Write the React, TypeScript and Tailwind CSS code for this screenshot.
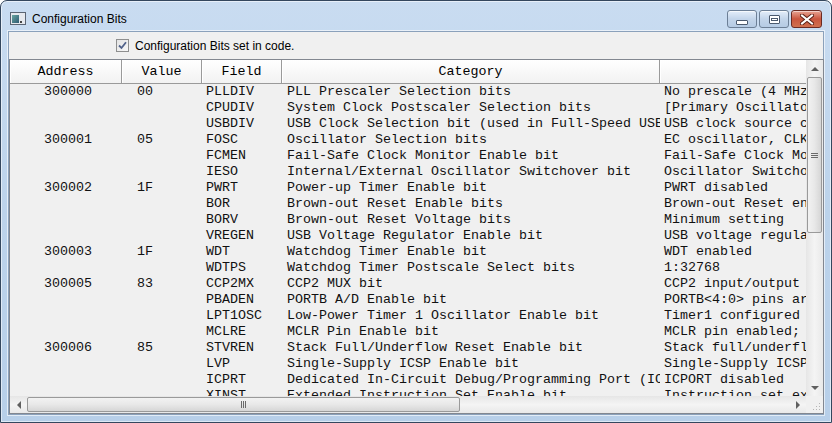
import React from 'react';

type Row = { addr: string; value: string; field: string; category: string; setting: string };

const rows: Row[] = [
  { addr: '300000', value: '00', field: 'PLLDIV', category: 'PLL Prescaler Selection bits', setting: 'No prescale (4 MHz oscillator input drives PLL directly)' },
  { addr: '', value: '', field: 'CPUDIV', category: 'System Clock Postscaler Selection bits', setting: '[Primary Oscillator Src: /1][96 MHz PLL Src: /2]' },
  { addr: '', value: '', field: 'USBDIV', category: 'USB Clock Selection bit (used in Full-Speed USB mode only; UCFG:FSEN = 1)', setting: 'USB clock source comes directly from the primary oscillator' },
  { addr: '300001', value: '05', field: 'FOSC', category: 'Oscillator Selection bits', setting: 'EC oscillator, CLKO function on RA6 (EC)' },
  { addr: '', value: '', field: 'FCMEN', category: 'Fail-Safe Clock Monitor Enable bit', setting: 'Fail-Safe Clock Monitor disabled' },
  { addr: '', value: '', field: 'IESO', category: 'Internal/External Oscillator Switchover bit', setting: 'Oscillator Switchover mode disabled' },
  { addr: '300002', value: '1F', field: 'PWRT', category: 'Power-up Timer Enable bit', setting: 'PWRT disabled' },
  { addr: '', value: '', field: 'BOR', category: 'Brown-out Reset Enable bits', setting: 'Brown-out Reset enabled in hardware only' },
  { addr: '', value: '', field: 'BORV', category: 'Brown-out Reset Voltage bits', setting: 'Minimum setting' },
  { addr: '', value: '', field: 'VREGEN', category: 'USB Voltage Regulator Enable bit', setting: 'USB voltage regulator disabled' },
  { addr: '300003', value: '1F', field: 'WDT', category: 'Watchdog Timer Enable bit', setting: 'WDT enabled' },
  { addr: '', value: '', field: 'WDTPS', category: 'Watchdog Timer Postscale Select bits', setting: '1:32768' },
  { addr: '300005', value: '83', field: 'CCP2MX', category: 'CCP2 MUX bit', setting: 'CCP2 input/output is multiplexed with RC1' },
  { addr: '', value: '', field: 'PBADEN', category: 'PORTB A/D Enable bit', setting: 'PORTB<4:0> pins are configured as analog input channels on Reset' },
  { addr: '', value: '', field: 'LPT1OSC', category: 'Low-Power Timer 1 Oscillator Enable bit', setting: 'Timer1 configured for higher power operation' },
  { addr: '', value: '', field: 'MCLRE', category: 'MCLR Pin Enable bit', setting: 'MCLR pin enabled; RE3 input pin disabled' },
  { addr: '300006', value: '85', field: 'STVREN', category: 'Stack Full/Underflow Reset Enable bit', setting: 'Stack full/underflow will cause Reset' },
  { addr: '', value: '', field: 'LVP', category: 'Single-Supply ICSP Enable bit', setting: 'Single-Supply ICSP enabled' },
  { addr: '', value: '', field: 'ICPRT', category: 'Dedicated In-Circuit Debug/Programming Port (ICPORT) Enable bit', setting: 'ICPORT disabled' },
  { addr: '', value: '', field: 'XINST', category: 'Extended Instruction Set Enable bit', setting: 'Instruction set extension and Indexed Addressing mode disabled' },
];

const mono = { fontFamily: '"Liberation Mono", "Courier New", monospace' };
const sans = { fontFamily: '"Liberation Sans", Arial, sans-serif' };

function CaptionButton({ kind }: { kind: 'min' | 'max' | 'close' }) {
  if (kind === 'close') {
    return (
      <div className="w-[31px] h-[18px] rounded-[3px] border border-[#6b2a22] bg-gradient-to-b from-[#e8a493] via-[#c9553e] to-[#d0704f] flex items-center justify-center shadow-[inset_0_1px_0_rgba(255,255,255,0.5)]">
        <svg width="14" height="11" viewBox="0 0 14 11">
          <path d="M2 1.5 L12 9.5 M12 1.5 L2 9.5" stroke="#5a2016" strokeWidth="4" strokeLinecap="square" />
          <path d="M2 1.5 L12 9.5 M12 1.5 L2 9.5" stroke="#ffffff" strokeWidth="2" strokeLinecap="square" />
        </svg>
      </div>
    );
  }
  return (
    <div className="w-[30px] h-[18px] rounded-[3px] border border-[#6c7f96] bg-gradient-to-b from-[#e4eefa] via-[#c3d5ea] to-[#b5cbe4] flex items-center justify-center shadow-[inset_0_1px_0_rgba(255,255,255,0.7)]">
      {kind === 'min' ? (
        <div className="w-[12px] h-[5px] mt-[6px] bg-white border border-[#4b5a6e] rounded-[1px]" />
      ) : (
        <div className="w-[11px] h-[9px] border border-[#4b5a6e] bg-white flex items-center justify-center rounded-[1px]">
          <div className="w-[7px] h-[3px] border border-[#4b5a6e] mt-[1px]" />
        </div>
      )}
    </div>
  );
}

function HeaderCell({ w, label }: { w: string; label: string }) {
  return (
    <div className={`${w} h-full shrink-0 flex items-center justify-center pt-[1px] border-r border-[#9a9a9a] bg-gradient-to-b from-[#ffffff] to-[#f2f2f2] text-black text-[13.33px] shadow-[inset_1px_0_0_#ffffff]`} style={mono}>
      {label}
    </div>
  );
}

function Arrow({ dir }: { dir: 'up' | 'down' | 'left' | 'right' }) {
  const pts = {
    up: '0,4 4,0 8,4',
    down: '0,0 8,0 4,4',
    left: '4,0 4,8 0,4',
    right: '0,0 0,8 4,4',
  }[dir];
  const horiz = dir === 'left' || dir === 'right';
  return (
    <svg width={horiz ? 4 : 8} height={horiz ? 8 : 4} viewBox={horiz ? '0 0 4 8' : '0 0 8 4'}>
      <polygon points={pts} fill="#606060" />
    </svg>
  );
}

export default function App() {
  return (
    <div className="w-[832px] h-[423px] overflow-hidden bg-white">
      <div className="w-full h-full rounded-t-[7px] border border-[#34475e] bg-gradient-to-b from-[#c9dcf1] via-[#bcd3eb] to-[#b7cfe9] flex flex-col shadow-[inset_0_0_0_1px_rgba(255,255,255,0.55)]">
        {/* title bar */}
        <div className="h-[30px] shrink-0 flex items-start pl-[9px] pr-[9px]">
          <div className="mt-[11px] w-[16px] h-[13px] border border-[#5b6573] bg-[#e6e9ee] flex items-end p-[1px] gap-[1px]">
            <div className="w-[7px] h-[8px] bg-gradient-to-br from-[#6aa6a0] to-[#2e5a72]" />
            <div className="w-[2px] h-[2px] bg-[#444]" />
          </div>
          <div className="ml-[6px] mt-[9px] text-[12px] text-black" style={sans}>
            Configuration Bits
          </div>
          <div className="ml-auto mt-[9px] flex gap-[2px]">
            <CaptionButton kind="min" />
            <CaptionButton kind="max" />
            <CaptionButton kind="close" />
          </div>
        </div>

        {/* client area */}
        <div className="flex-1 min-h-0 px-[7px] pb-[7px]">
          <div className="h-full border border-[#8ba1bb] bg-[#f0f0f0] flex flex-col shadow-[0_0_0_1px_rgba(255,255,255,0.6)]">
            <div className="h-[26px] shrink-0 flex items-center pl-[107px] pt-[1px]">
              <div className="w-[13px] h-[13px] border border-[#8e8f8f] bg-gradient-to-br from-[#e4e4e4] to-[#f8f8f8] flex items-center justify-center">
                <svg width="9" height="9" viewBox="0 0 9 9">
                  <path d="M1 4.5 L3.5 7 L8 1.2" stroke="#51628a" strokeWidth="1.8" fill="none" />
                </svg>
              </div>
              <span className="ml-[6px] text-[12px] text-black" style={sans}>
                Configuration Bits set in code.
              </span>
            </div>

            {/* list view */}
            <div className="mt-[1px] mr-[-1px] flex-1 min-h-0 border border-[#828790] bg-[#f0f0f0] flex flex-col">
              <div className="flex-1 min-h-0 flex">
                <div className="flex-1 min-w-0 overflow-hidden flex flex-col">
                  <div className="h-[24px] shrink-0 flex border-b border-[#9a9a9a] w-[1100px]">
                    <HeaderCell w="w-[112px]" label="Address" />
                    <HeaderCell w="w-[80px]" label="Value" />
                    <HeaderCell w="w-[80px]" label="Field" />
                    <HeaderCell w="w-[378px]" label="Category" />
                    <HeaderCell w="w-[450px]" label="" />
                  </div>
                  <div className="flex-1 min-h-0 overflow-hidden text-[13.33px] text-[#111]" style={mono}>
                    {rows.map((r, i) => (
                      <div key={i} className="h-[16px] flex items-center whitespace-nowrap leading-[16px]">
                        <div className="w-[112px] shrink-0 overflow-hidden pl-[34px]">{r.addr}</div>
                        <div className="w-[80px] shrink-0 overflow-hidden pl-[15px]">{r.value}</div>
                        <div className="w-[80px] shrink-0 overflow-hidden pl-[4px]">{r.field}</div>
                        <div className="w-[378px] shrink-0 overflow-hidden pl-[5px]">{r.category}</div>
                        <div className="w-[450px] shrink-0 overflow-hidden pl-[4px]">{r.setting}</div>
                      </div>
                    ))}
                  </div>
                </div>
                {/* vertical scrollbar */}
                <div className="w-[17px] shrink-0 bg-gradient-to-r from-[#e6e6e6] via-[#f4f4f4] to-[#e9e9e9] flex flex-col">
                  <div className="h-[17px] flex items-center justify-center">
                    <Arrow dir="up" />
                  </div>
                  <div className="h-[156px] mx-[1px] rounded-[2px] border border-[#9a9a9a] bg-gradient-to-r from-[#f2f2f2] via-[#e8e8e8] to-[#d6d6d6] flex items-center justify-center">
                    <svg width="7" height="7" viewBox="0 0 7 7">
                      <path d="M0 1.5 H7 M0 3.5 H7 M0 5.5 H7" stroke="#6a6a6a" strokeWidth="1" />
                    </svg>
                  </div>
                  <div className="flex-1" />
                  <div className="h-[17px] flex items-center justify-center">
                    <Arrow dir="down" />
                  </div>
                </div>
              </div>
              {/* horizontal scrollbar */}
              <div className="h-[17px] shrink-0 flex">
                <div className="flex-1 flex bg-gradient-to-b from-[#e6e6e6] via-[#f4f4f4] to-[#e9e9e9]">
                  <div className="w-[17px] flex items-center justify-center">
                    <Arrow dir="left" />
                  </div>
                  <div className="w-[433px] my-[1px] rounded-[2px] border border-[#9a9a9a] bg-gradient-to-b from-[#f2f2f2] via-[#e8e8e8] to-[#d6d6d6] flex items-center justify-center">
                    <svg width="7" height="7" viewBox="0 0 7 7">
                      <path d="M1.5 0 V7 M3.5 0 V7 M5.5 0 V7" stroke="#6a6a6a" strokeWidth="1" />
                    </svg>
                  </div>
                  <div className="flex-1" />
                  <div className="w-[17px] flex items-center justify-center">
                    <Arrow dir="right" />
                  </div>
                </div>
                <div className="w-[17px] bg-[#f0f0f0] flex items-end justify-end p-[2px]">
                  <svg width="8" height="8" viewBox="0 0 8 8">
                    <rect x="6" y="0" width="1" height="1" fill="#b5b5b5" />
                    <rect x="3" y="3" width="1" height="1" fill="#b5b5b5" />
                    <rect x="6" y="3" width="1" height="1" fill="#b5b5b5" />
                    <rect x="0" y="6" width="1" height="1" fill="#b5b5b5" />
                    <rect x="3" y="6" width="1" height="1" fill="#b5b5b5" />
                    <rect x="6" y="6" width="1" height="1" fill="#b5b5b5" />
                  </svg>
                </div>
              </div>
            </div>
          </div>
        </div>
      </div>
    </div>
  );
}
